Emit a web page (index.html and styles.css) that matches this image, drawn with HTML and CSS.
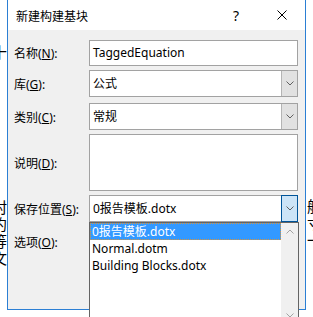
FILE: index.html
```html
<!DOCTYPE html>
<html lang="zh-CN">
<head>
    <meta charset="UTF-8">
    <meta name="viewport" content="width=device-width, initial-scale=1.0">
    <title>新建构建基块</title>
    <link rel="stylesheet" href="styles.css">
</head>
<body>
    <div class="desk">
        <!-- texto do documento por trás do diálogo -->
        <div class="edge edge-left">
            <span class="mark mark-top">十</span>
            <span class="mark mark-low">村</span>
            <span class="mark">约</span>
            <span class="mark">等</span>
            <span class="mark">文</span>
        </div>

        <div class="dialog">
            <div class="titlebar">
                <span class="title">新建构建基块</span>
                <span class="title-btn">?</span>
                <span class="title-btn">
                    <svg class="close-icon" viewBox="0 0 10 10">
                        <path d="M0.5,0.5 L9.5,9.5 M9.5,0.5 L0.5,9.5" />
                    </svg>
                </span>
            </div>

            <div class="form">
                <div class="row row-name">
                    <label>名称(<u>N</u>):</label>
                    <div class="field text">TaggedEquation</div>
                </div>
                <div class="row row-gallery">
                    <label>库(<u>G</u>):</label>
                    <div class="field combo">
                        <span class="value">公式</span>
                        <span class="arrow">
                            <svg class="chevron" viewBox="0 0 8 5"><path d="M0.5,0.5 L4,4 L7.5,0.5" /></svg>
                        </span>
                    </div>
                </div>
                <div class="row row-category">
                    <label>类别(<u>C</u>):</label>
                    <div class="field combo">
                        <span class="value">常规</span>
                        <span class="arrow">
                            <svg class="chevron" viewBox="0 0 8 5"><path d="M0.5,0.5 L4,4 L7.5,0.5" /></svg>
                        </span>
                    </div>
                </div>
                <div class="row row-desc">
                    <label>说明(<u>D</u>):</label>
                    <div class="field memo"></div>
                </div>
                <div class="row row-save">
                    <label>保存位置(<u>S</u>):</label>
                    <div class="field combo">
                        <span class="value">0报告模板.dotx</span>
                        <span class="arrow active">
                            <svg class="chevron" viewBox="0 0 8 5"><path d="M0.5,0.5 L4,4 L7.5,0.5" /></svg>
                        </span>
                    </div>
                </div>
                <div class="row row-options">
                    <label>选项(<u>O</u>):</label>
                    <div class="field combo"></div>
                </div>
            </div>

            <!-- lista aberta do combo "保存位置" -->
            <div class="dropdown">
                <ul class="options">
                    <li class="selected">0报告模板.dotx</li>
                    <li>Normal.dotm</li>
                    <li>Building Blocks.dotx</li>
                </ul>
                <div class="scrollbar">
                    <span class="scroll-btn">
                        <svg class="chevron up" viewBox="0 0 8 5"><path d="M0.5,4.5 L4,1 L7.5,4.5" /></svg>
                    </span>
                    <span class="scroll-btn">
                        <svg class="chevron" viewBox="0 0 8 5"><path d="M0.5,0.5 L4,4 L7.5,0.5" /></svg>
                    </span>
                </div>
            </div>
        </div>

        <div class="edge edge-right">
            <span class="mark mark-low">航</span>
            <span class="mark">寸</span>
            <span class="mark">一</span>
        </div>
    </div>
</body>
</html>
```

FILE: styles.css
```css
body {
    margin: 0;
    padding: 0;
    width: 313px;
    height: 317px;
    overflow: hidden;
    background-color: white;
    font-family: 'Noto Sans', 'Noto Sans CJK SC', sans-serif;
    font-size: 12px;
    color: #000;
}

.desk {
    display: flex;
    height: 317px;
}

.edge {
    width: 7px;
    flex-shrink: 0;
    overflow: hidden;
    display: flex;
    flex-direction: column;
    font-family: 'Noto Sans CJK SC', sans-serif;
    font-size: 15px;
    line-height: 17px;
}

.edge-left .mark {
    margin-left: -8px;
}

.edge-right {
    padding-left: 1px;
}

.mark-top {
    margin-top: 43px;
}

.edge-left .mark-low {
    margin-top: 138px;
}

.edge-right .mark-low {
    margin-top: 197px;
}

.dialog {
    position: relative;
    width: 297px;
    height: 309px;
    flex-shrink: 0;
    background-color: #f0f0f0;
    border-left: 1px solid #2b7fd4;
    border-right: 1px solid #2b7fd4;
    border-bottom: 1px solid #2b7fd4;
}

.titlebar {
    height: 30px;
    display: flex;
    align-items: center;
    background-color: white;
    padding-left: 8px;
}

.title {
    flex: 1;
    font-family: 'Noto Sans CJK SC', sans-serif;
    font-size: 12px;
}

.title-btn {
    width: 46px;
    height: 30px;
    display: flex;
    justify-content: center;
    align-items: center;
    font-size: 14px;
}

.close-icon {
    width: 10px;
    height: 10px;
    stroke: #000;
    stroke-width: 1;
    fill: none;
}

.form {
    padding: 10px 7px 0 6px;
}

.row {
    display: flex;
    align-items: center;
}

.row label {
    width: 75px;
    flex-shrink: 0;
}

.row u {
    text-decoration: underline;
    text-underline-offset: 1px;
}

.field {
    width: 209px;
    box-sizing: border-box;
    background-color: white;
    border: 1px solid #a2a2a2;
}

.row-name {
    margin-bottom: 4px;
}

.row-name .field {
    height: 26px;
    padding-left: 3px;
    line-height: 24px;
}

.row-gallery {
    margin-bottom: 6px;
}

.row-category {
    margin-bottom: 4px;
}

.row-desc {
    margin-bottom: 4px;
}

.row-desc .field {
    height: 57px;
}

.row-save {
    margin-bottom: 6px;
}

.combo {
    height: 27px;
    display: flex;
}

.combo .value {
    flex: 1;
    padding-left: 3px;
    line-height: 25px;
}

.arrow {
    width: 16px;
    box-sizing: border-box;
    background-color: #e1e1e1;
    border-left: 1px solid #b4b4b4;
    display: flex;
    justify-content: center;
    align-items: center;
    margin-left: auto;
}

.arrow.active {
    background-color: #cce4f7;
    border: 1px solid #005499;
    margin: -1px -1px -1px auto;
    width: 17px;
}

.chevron {
    width: 8px;
    height: 5px;
    stroke: #606060;
    stroke-width: 1;
    fill: none;
}

.dropdown {
    position: absolute;
    left: 81px;
    top: 222px;
    width: 210px;
    height: 103px;
    box-sizing: border-box;
    display: flex;
    background-color: white;
    border: 1px solid #646464;
}

.options {
    list-style: none;
    margin: 0;
    padding: 0;
    flex: 1;
}

.options li {
    height: 17px;
    line-height: 17px;
    padding-left: 2px;
    box-sizing: border-box;
}

.options .selected {
    background-color: #3399ff;
    color: white;
    border: 1px dotted #d9943a;
    padding-left: 1px;
    line-height: 15px;
}

.scrollbar {
    width: 17px;
    background-color: #f0f0f0;
    display: flex;
    flex-direction: column;
    justify-content: space-between;
}

.scroll-btn {
    height: 17px;
    display: flex;
    justify-content: center;
    align-items: center;
}

.scroll-btn .chevron {
    stroke: #a3a3a3;
}
```
